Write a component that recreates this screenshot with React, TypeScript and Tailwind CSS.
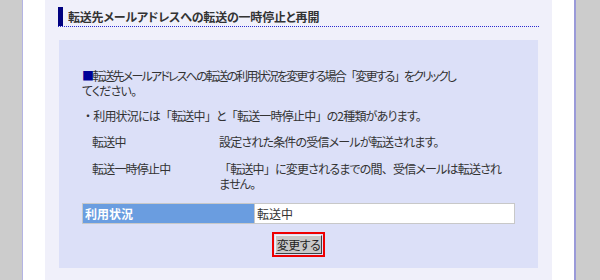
const jp = { fontFamily: '"Noto Sans CJK JP", "Noto Sans", sans-serif' }

// full-width punctuation, like the original page's font
function F({ children }: { children: string }) {
  return <span className="[font-feature-settings:normal]">{children}</span>
}

export default function App() {
  return (
    <div
      className="flex h-[280px] w-[600px] overflow-hidden bg-[#cccccc] text-[12px] leading-[15px] text-[#333333] [font-feature-settings:'palt']"
      style={jp}
    >
      <div className="w-[23px] shrink-0 border-r border-[#b4b4e4] bg-[#cccccc]" />
      <div className="flex w-[551px] shrink-0 bg-white px-[22px]">
        <div className="flex w-[507px] flex-col bg-[#f0f0fa] px-[13px] pt-[7px]">
          <div className="border-b border-dotted border-[#2a2ad0]">
            <h2 className="flex h-[19px] items-stretch text-[12px] font-bold tracking-[-0.2px] text-[#333333]">
              <span className="w-[5px] shrink-0 bg-[#000080]" />
              <span className="flex items-center pl-[5px]">転送先メールアドレスへの転送の一時停止と再開</span>
            </h2>
          </div>
          <div className="ml-[1px] mr-[1px] mt-[13px] flex h-[228px] flex-col bg-[#dce0f8] px-[23px] pt-[28px] tracking-[-0.8px]">
            <p>
              <span className="tracking-[-1.8px]">
                <span className="text-[#000099]">■</span>転送先メールアドレスへの転送の利用状況を変更する場合<F>「</F>変更する<F>」</F>をクリックし
              </span>
              <br />
              てください。
            </p>
            <p className="mt-[10px]">
              <F>・</F>利用状況には<F>「</F>転送中<F>」</F>と<F>「</F>転送一時停止中<F>」</F>の2種類があります。
            </p>
            <div className="mt-[11px] flex">
              <div className="w-[137px] shrink-0 pl-[10px]">転送中</div>
              <div>設定された条件の受信メールが転送されます。</div>
            </div>
            <div className="mt-[12px] flex">
              <div className="w-[137px] shrink-0 pl-[10px]">転送一時停止中</div>
              <div>
                <F>「</F>転送中<F>」</F>に変更されるまでの間<F>、</F>受信メールは転送され
                <br />
                ません。
              </div>
            </div>
            <div className="mt-[12px] flex h-[21px] border border-[#c8c8c8] bg-white tracking-normal">
              <div className="flex w-[172px] shrink-0 items-center border-r border-[#c8c8c8] bg-[#6a9de0] pl-[2px] font-bold text-white">
                利用状況
              </div>
              <div className="flex items-center pl-[2px]">転送中</div>
            </div>
            <div className="mt-[8px] flex justify-center">
              <div className="border-2 border-[#ee0000] p-[1px]">
                <button className="flex h-[19px] w-[47px] items-center justify-center whitespace-nowrap border border-b-[#404040] border-l-[#f4f4f4] border-r-[#404040] border-t-[#f4f4f4] bg-[#c8c8c8] px-0 text-[12px] leading-none tracking-[-0.5px] text-[#222222]">
                  変更する
                </button>
              </div>
            </div>
          </div>
        </div>
      </div>
      <div className="w-[26px] shrink-0 border-l-2 border-[#9a9ad8] bg-[#cccccc]" />
    </div>
  )
}
